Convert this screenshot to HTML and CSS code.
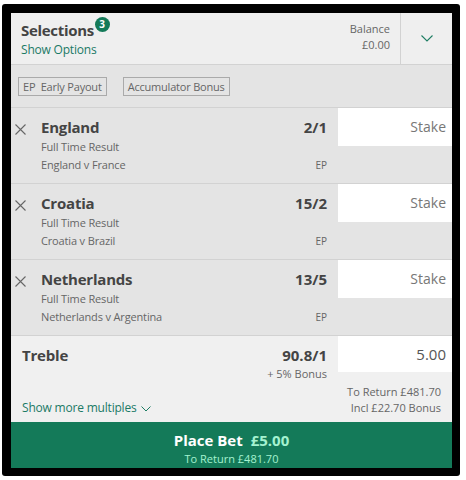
FILE: index.html
```html
<!DOCTYPE html>
<html lang="en">
<head>
    <meta charset="UTF-8">
    <title>Bet Slip</title>
    <link rel="stylesheet" href="styles.css">
</head>
<body>
    <div class="frame">
        <div class="slip">
            <div class="header">
                <div class="title-block">
                    <div class="title">Selections <span class="badge">3</span></div>
                    <a class="link">Show Options</a>
                </div>
                <div class="balance">Balance<br>£0.00</div>
                <div class="toggle">
                    <svg width="12" height="7" viewBox="0 0 12 7"><path d="M0.5 0.5 L6 6 L11.5 0.5" fill="none" stroke="#1e7d63" stroke-width="1.1"/></svg>
                </div>
            </div>

            <div class="options">
                <span class="tag">EP&nbsp; Early Payout</span>
                <span class="tag">Accumulator Bonus</span>
            </div>

            <div class="selection">
                <div class="remove">
                    <svg width="11" height="11" viewBox="0 0 11 11"><path d="M0.5 0.5 L10.5 10.5 M10.5 0.5 L0.5 10.5" stroke="#666" stroke-width="1.1"/></svg>
                </div>
                <div class="info">
                    <div class="line">
                        <span class="name">England</span>
                        <span class="odds">2/1</span>
                    </div>
                    <div class="market">Full Time Result</div>
                    <div class="line">
                        <span class="event">England v France</span>
                        <span class="ep">EP</span>
                    </div>
                </div>
                <div class="stake-col"><div class="stake placeholder">Stake</div></div>
            </div>

            <div class="selection">
                <div class="remove">
                    <svg width="11" height="11" viewBox="0 0 11 11"><path d="M0.5 0.5 L10.5 10.5 M10.5 0.5 L0.5 10.5" stroke="#666" stroke-width="1.1"/></svg>
                </div>
                <div class="info">
                    <div class="line">
                        <span class="name">Croatia</span>
                        <span class="odds">15/2</span>
                    </div>
                    <div class="market">Full Time Result</div>
                    <div class="line">
                        <span class="event">Croatia v Brazil</span>
                        <span class="ep">EP</span>
                    </div>
                </div>
                <div class="stake-col"><div class="stake placeholder">Stake</div></div>
            </div>

            <div class="selection">
                <div class="remove">
                    <svg width="11" height="11" viewBox="0 0 11 11"><path d="M0.5 0.5 L10.5 10.5 M10.5 0.5 L0.5 10.5" stroke="#666" stroke-width="1.1"/></svg>
                </div>
                <div class="info">
                    <div class="line">
                        <span class="name">Netherlands</span>
                        <span class="odds">13/5</span>
                    </div>
                    <div class="market">Full Time Result</div>
                    <div class="line">
                        <span class="event">Netherlands v Argentina</span>
                        <span class="ep">EP</span>
                    </div>
                </div>
                <div class="stake-col"><div class="stake placeholder">Stake</div></div>
            </div>

            <div class="multiple">
                <div class="multi-info">
                    <div class="line">
                        <span class="name">Treble</span>
                        <span class="odds">90.8/1</span>
                    </div>
                    <div class="bonus">+ 5% Bonus</div>
                    <a class="link more">Show more multiples
                        <svg width="10" height="6" viewBox="0 0 10 6"><path d="M0.5 0.5 L5 5 L9.5 0.5" fill="none" stroke="#1e7d63" stroke-width="1"/></svg>
                    </a>
                </div>
                <div class="stake-col">
                    <div class="stake">5.00</div>
                    <div class="returns">To Return £481.70<br>Incl £22.70 Bonus</div>
                </div>
            </div>

            <div class="place-bet">
                <div class="place-main">Place Bet <span class="amount">£5.00</span></div>
                <div class="place-sub">To Return £481.70</div>
            </div>
        </div>
    </div>
</body>
</html>
```

FILE: styles.css
```css
:root {
    --green: #147a59;
    --link-color: #1b7a66;
    --text-color: #444;
    --muted: #666;
    --row-bg: #e4e4e4;
    --light-bg: #efefef;
    --line: #d2d2d2;
}

body {
    margin: 0;
    background: #fff;
    font-family: "Segoe UI", "Open Sans", sans-serif;
    color: var(--text-color);
}

.frame {
    margin: 4px 6px 0 2px;
    width: 441px;
    padding: 9px 8px 8px 9px;
    background: #000;
    border-radius: 3px;
}

.slip {
    background: var(--row-bg);
}

.header {
    display: flex;
    height: 51px;
    background: var(--light-bg);
    border-bottom: 1px solid var(--line);
}

.title-block {
    flex: 1;
    padding: 7px 0 0 10px;
}

.title {
    font-size: 15px;
    font-weight: 700;
    line-height: 20px;
    letter-spacing: -0.3px;
}

.badge {
    display: inline-block;
    position: relative;
    top: -8px;
    margin-left: -3px;
    width: 15px;
    height: 15px;
    border-radius: 50%;
    background: var(--green);
    color: #fff;
    font-size: 10px;
    line-height: 15px;
    text-align: center;
    letter-spacing: 0;
}

.link {
    color: var(--link-color);
    font-size: 12px;
    letter-spacing: -0.2px;
}

.title-block .link {
    display: block;
    margin-top: 1px;
}

.balance {
    padding: 8px 10px 0 0;
    text-align: right;
    font-size: 11px;
    line-height: 16px;
    color: var(--muted);
}

.toggle {
    width: 51px;
    border-left: 1px solid var(--line);
    display: flex;
    align-items: center;
    justify-content: center;
}

.options {
    display: flex;
    gap: 16px;
    height: 42px;
    align-items: center;
    padding-left: 7px;
    border-bottom: 1px solid var(--line);
}

.tag {
    border: 1px solid #aaa;
    padding: 0 4px;
    font-size: 11px;
    line-height: 17px;
    letter-spacing: -0.2px;
    color: var(--muted);
}

.selection {
    display: flex;
    height: 75px;
    border-bottom: 1px solid var(--line);
}

.remove {
    width: 30px;
    padding: 10px 0 0 4px;
    box-sizing: border-box;
}

.info {
    flex: 1;
    padding: 8px 11px 0 0;
}

.line {
    display: flex;
    justify-content: space-between;
    align-items: baseline;
}

.name {
    font-size: 15px;
    font-weight: 700;
    line-height: 22px;
    letter-spacing: -0.2px;
}

.odds {
    font-size: 15px;
    font-weight: 700;
}

.market,
.event {
    font-size: 11px;
    line-height: 18px;
    color: var(--muted);
    letter-spacing: -0.15px;
}

.ep {
    font-size: 10px;
    color: var(--muted);
}

.stake-col {
    width: 114px;
}

.stake {
    height: 38px;
    background: #fff;
    text-align: right;
    padding-right: 6px;
    font-size: 14px;
    line-height: 38px;
}

.placeholder {
    color: #777;
}

.multiple {
    display: flex;
    height: 86px;
    background: #f0f0f0;
}

.multi-info {
    flex: 1;
    padding: 8px 11px 0 11px;
    display: flex;
    flex-direction: column;
}

.bonus {
    text-align: right;
    font-size: 11px;
    color: var(--muted);
    line-height: 14px;
    margin-top: 1px;
}

.more {
    margin-top: auto;
    padding-bottom: 6px;
    font-size: 12px;
}

.more svg {
    margin-left: 2px;
}

.multiple .stake {
    height: 36px;
    line-height: 36px;
    font-size: 15px;
    color: #555;
}

.returns {
    text-align: right;
    padding: 12px 11px 0 0;
    font-size: 11px;
    line-height: 16px;
    color: var(--muted);
}

.place-bet {
    height: 46px;
    background: var(--green);
    text-align: center;
    color: #fff;
}

.place-main {
    padding-top: 8px;
    font-size: 15px;
    font-weight: 700;
    line-height: 20px;
}

.amount {
    margin-left: 4px;
    color: #a4f2d0;
}

.place-sub {
    font-size: 11px;
    line-height: 17px;
    color: #a4f2d0;
}
```
